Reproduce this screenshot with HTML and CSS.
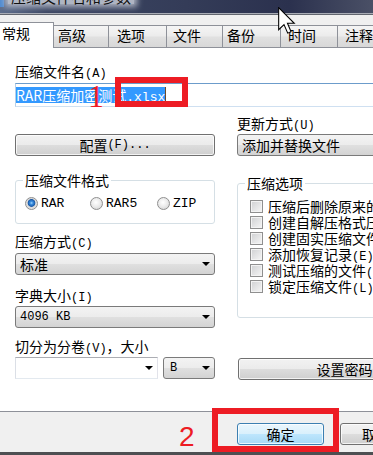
FILE: index.html
```html
<!DOCTYPE html>
<html lang="zh-CN">
<head>
<meta charset="utf-8">
<title>压缩文件名和参数</title>
<link rel="stylesheet" href="styles.css">
</head>
<body>
<div class="window">
  <div class="titlebar">
    <span class="app-icon"></span>
    <span class="title">压缩文件名和参数</span>
  </div>
  <div class="frame-edge"></div>

  <div class="tabs">
    <div class="tab active">常规</div>
    <div class="tab t2">高级</div>
    <div class="tab t3">选项</div>
    <div class="tab t4">文件</div>
    <div class="tab t5">备份</div>
    <div class="tab t6">时间</div>
    <div class="tab t7">注释</div>
  </div>

  <div class="panel">
    <div class="label">压缩文件名<span class="en">(A)</span></div>
    <div class="input"><span class="sel">RAR压缩加密测试<span class="en">.xlsx</span></span><span class="caret"></span></div>

    <div class="cols">
      <div class="col">
        <button class="btn btn-config">配置<span class="en">(F)...</span></button>

        <fieldset class="group fmt">
          <legend>压缩文件格式</legend>
          <div class="radios">
            <div class="opt o1"><span class="radio on"></span><span class="en rl">RAR</span></div>
            <div class="opt o2"><span class="radio"></span><span class="en rl">RAR5</span></div>
            <div class="opt"><span class="radio"></span><span class="en rl">ZIP</span></div>
          </div>
        </fieldset>

        <div class="label l-method">压缩方式<span class="en">(C)</span></div>
        <div class="combo c-method"><span>标准</span><span class="arrow"></span></div>

        <div class="label l-dict">字典大小<span class="en">(I)</span></div>
        <div class="combo c-dict"><span class="en">4096 KB</span><span class="arrow"></span></div>

        <div class="label l-split">切分为分卷<span class="en">(V)</span>，大小</div>
        <div class="split-row">
          <div class="combo edit"><span></span><span class="arrow"></span></div>
          <div class="combo unit"><span class="en">B</span><span class="arrow"></span></div>
        </div>
      </div>

      <div class="col">
        <div class="label">更新方式<span class="en">(U)</span></div>
        <div class="combo c-update"><span>添加并替换文件</span><span class="arrow"></span></div>

        <fieldset class="group opts">
          <legend>压缩选项</legend>
          <div class="checks">
            <div class="check-row"><span class="check"></span><span>压缩后删除原来的文件<span class="en">(D)</span></span></div>
            <div class="check-row"><span class="check"></span><span>创建自解压格式压缩文件<span class="en">(X)</span></span></div>
            <div class="check-row"><span class="check"></span><span>创建固实压缩文件<span class="en">(S)</span></span></div>
            <div class="check-row"><span class="check"></span><span>添加恢复记录<span class="en">(E)</span></span></div>
            <div class="check-row"><span class="check"></span><span>测试压缩的文件<span class="en">(T)</span></span></div>
            <div class="check-row"><span class="check"></span><span>锁定压缩文件<span class="en">(L)</span></span></div>
          </div>
        </fieldset>

        <button class="btn btn-pass">设置密码</button>
      </div>
    </div>
  </div>

  <div class="footer">
    <button class="btn default">确定</button>
    <button class="btn cancel">取消</button>
  </div>
  <div class="bottom-edge"></div>

  <div class="mark box1"></div>
  <div class="num num1">1</div>
  <div class="mark box2"></div>
  <div class="num num2">2</div>

  <svg class="cursor" width="18" height="28" viewBox="0 0 13.5 21" aria-hidden="true">
    <path d="M0.5 0.5 L0.5 17 L4.5 13.2 L7.3 19.6 L9.8 18.5 L7.1 12.2 L12.2 12.2 Z" fill="#fff" stroke="#000" stroke-width="0.8" stroke-linejoin="miter"/>
  </svg>
</div>
</body>
</html>
```

FILE: styles.css
```css
* { box-sizing: border-box; }

html, body { margin: 0; padding: 0; }

body {
  width: 373px;
  height: 455px;
  overflow: hidden;
  background: #f0f0f0;
  font-family: "Noto Sans CJK SC", "Noto Sans", sans-serif;
  font-size: 14px;
  line-height: 16px;
  color: #000;
}

.window {
  position: relative;
  width: 466px;
  height: 455px;
  display: flex;
  flex-direction: column;
  background: #f0f0f0;
}

.en {
  font-family: "Liberation Mono", monospace;
  font-size: 12px;
  line-height: 1;
}

/* title bar */
.titlebar {
  height: 13px;
  flex: none;
  overflow: hidden;
  display: flex;
  align-items: flex-start;
  background: linear-gradient(to right, #5d6d8c 0, #3b4663 10%, #343c58 40%, #2b314e 62%, #4a5066 80%, #6f7381 100%);
}
.app-icon {
  flex: none;
  width: 4px;
  height: 7px;
  background: #4f8ad0;
}
.title {
  margin-top: -11px;
  margin-left: 4px;
  padding: 0 3px;
  font-size: 15px;
  line-height: 15px;
  color: #111;
  background: rgba(196, 201, 212, 0.85);
  box-shadow: 0 0 6px 3px rgba(196, 201, 212, 0.85);
  white-space: nowrap;
}
.frame-edge {
  flex: none;
  height: 2px;
  border-top: 1px solid #a9adb6;
  background: #62666f;
}

/* tabs */
.tabs {
  flex: none;
  height: 32px;
  display: flex;
  align-items: flex-end;
}
.tab {
  flex: none;
  height: 22px;
  padding-bottom: 3px;
  display: flex;
  align-items: center;
  white-space: nowrap;
  border-top: 1px solid #8e9199;
  border-right: 1px solid #8e9199;
  background: linear-gradient(#f5f5f5, #ececec 45%, #e0e0e0 55%, #d8d8d8);
}
.tab.active {
  position: relative;
  z-index: 1;
  width: 56px;
  height: 26px;
  margin-left: -2px;
  margin-bottom: -1px;
  padding-left: 3px;
  padding-bottom: 5px;
  border-left: 1px solid #8e9199;
  background: #fff;
}
.t2 { width: 55px; padding-left: 4px; }
.t3 { width: 58px; padding-left: 8px; }
.t4 { width: 56px; padding-left: 6px; }
.t5 { width: 58px; padding-left: 4px; }
.t6 { width: 57px; padding-left: 7px; }
.t7 { width: 58px; padding-left: 7px; }

/* panel */
.panel {
  flex: none;
  height: 365px;
  background: #fff;
  border-top: 1px solid #8e9199;
  border-bottom: 1px solid #8e9199;
  padding: 15px 0 0 15px;
}
.label {
  height: 16px;
  line-height: 16px;
  white-space: nowrap;
}

.input {
  width: 436px;
  height: 24px;
  margin-top: 4px;
  display: flex;
  align-items: center;
  border: 1px solid;
  border-color: #6c9ccb #b5cfe8 #cfe0f1 #b5cfe8;
  background: #fff;
}
.input .en { font-size: 13px; }
.sel {
  height: 16px;
  background: #3399ff;
  color: #fff;
  line-height: 16px;
  white-space: nowrap;
}
.caret {
  width: 1px;
  height: 16px;
  background: #6b4a2a;
}

.cols {
  display: grid;
  grid-template-columns: 200px 214px;
  column-gap: 22px;
  margin-top: 8px;
}
.col {
  display: flex;
  flex-direction: column;
}

/* buttons */
.btn {
  font: inherit;
  color: #000;
  height: 22px;
  padding: 0;
  display: flex;
  align-items: center;
  justify-content: center;
  border: 1px solid #707070;
  border-radius: 3px;
  background: linear-gradient(#f2f2f2, #ebebeb 50%, #dddddd 50%, #cfcfcf);
  box-shadow: inset 0 0 0 1px rgba(255, 255, 255, 0.75);
  white-space: nowrap;
}
.btn-config { margin-top: 19px; }
.btn-pass { margin-top: 40px; margin-left: 1px; }

/* group boxes */
.group {
  margin: 0;
  min-width: 0;
  border: 1px solid #d5dfe5;
  border-radius: 3px;
  padding: 0;
}
.group legend {
  height: 16px;
  margin-left: 7px;
  padding: 0 2px;
  line-height: 16px;
}
.fmt { margin-top: 16px; padding: 8px 0 13px 0; }
.radios {
  height: 14px;
  padding-left: 9px;
  display: flex;
  align-items: center;
}
.opt {
  display: flex;
  align-items: center;
  gap: 3px;
}
.o1 { width: 65px; }
.o2 { width: 67px; }
.rl { font-size: 13px; }

.radio {
  flex: none;
  width: 13px;
  height: 13px;
  border-radius: 50%;
  border: 1px solid #8f8f8f;
  background: radial-gradient(circle at 45% 40%, #ffffff 0, #ececec 45%, #cdcdcd 100%);
}
.radio.on {
  background: radial-gradient(circle at 50% 45%, #a8d8fa 0, #3a8ee0 1.5px, #1b5aa8 3.5px, #d8d8d8 4.2px, #f4f4f4 100%);
}

.opts { margin-top: 19px; padding: 7px 0 23px 0; }
.checks { padding-left: 12px; }
.check-row {
  height: 16px;
  display: flex;
  align-items: center;
  gap: 5px;
  white-space: nowrap;
}
.check {
  flex: none;
  width: 13px;
  height: 13px;
  border: 1px solid #8f8f8f;
  background: linear-gradient(135deg, #cfd0d2, #f6f6f6);
  box-shadow: inset 0 0 0 1px #f3f3f3;
}

/* combos */
.combo {
  height: 22px;
  display: flex;
  align-items: center;
  justify-content: space-between;
  padding: 0 4px;
  border: 1px solid #7a7a7a;
  border-radius: 3px;
  background: linear-gradient(#f3f3f3, #ececec 50%, #e0e0e0 50%, #d3d3d3);
  white-space: nowrap;
}
.combo.edit {
  width: 143px;
  border-radius: 0;
  border-color: #abadb3 #e2e3ea #e3e9ef #dbdfe6;
  background: #fff;
}
.combo.unit { width: 52px; padding-left: 6px; }
.arrow {
  flex: none;
  width: 0;
  height: 0;
  border-left: 4px solid transparent;
  border-right: 4px solid transparent;
  border-top: 4px solid #000;
}
.c-update { margin-top: 3px; }
.l-method { margin-top: 9px; }
.c-method { margin-top: 4px; }
.l-dict { margin-top: 12px; }
.c-dict { margin-top: 3px; }
.l-split { margin-top: 10px; }
.split-row {
  margin-top: 3px;
  display: flex;
  gap: 5px;
}

/* footer */
.footer {
  flex: none;
  height: 40px;
  padding: 11px 0 0 237px;
  display: flex;
  align-items: flex-start;
  gap: 16px;
}
.footer .btn { height: 22px; }
.btn.default {
  width: 87px;
  border-color: #3c7fb1;
  background: linear-gradient(#eaf6fd, #d9f0fc 50%, #bee6fd 50%, #a7d9f5);
}
.btn.cancel { width: 72px; }
.bottom-edge {
  flex: none;
  height: 3px;
  background: #4e4f52;
}

/* annotations overlaid on the screenshot */
.mark {
  position: absolute;
  border: 6px solid #ed1c24;
}
.box1 { left: 115px; top: 77px; width: 73px; height: 30px; }
.box2 { left: 212px; top: 408px; width: 127px; height: 44px; }
.num {
  position: absolute;
  color: #ed1c24;
}
.num1 {
  left: 88px;
  top: 80px;
  font-family: "Liberation Serif", serif;
  font-size: 32px;
  line-height: 32px;
}
.num2 {
  left: 179px;
  top: 423px;
  font-family: "Liberation Sans", sans-serif;
  font-size: 28px;
  line-height: 28px;
}
.cursor {
  position: absolute;
  left: 278px;
  top: 7px;
}
```
